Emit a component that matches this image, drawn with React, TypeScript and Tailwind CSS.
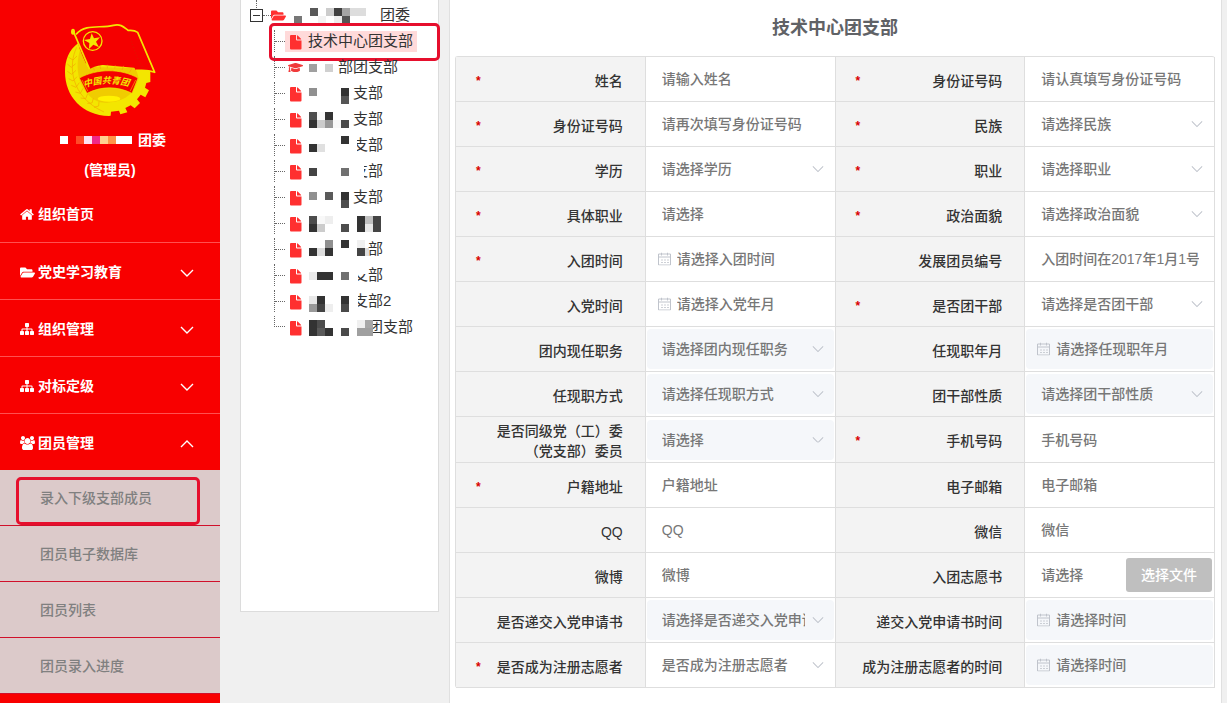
import type { ReactNode } from 'react'
import { FaFolderOpen, FaGraduationCap } from 'react-icons/fa'

type Cell = [x: number, y: number, color: string, w?: number, h?: number]

type Branch = {
  name: string
  indent: string
  icon?: 'cap'
  cells: Cell[]
}

type FieldDef = {
  id: string
  label: ReactNode
  hint: string
  kind?: 'select' | 'date' | 'file'
  required?: boolean
  disabled?: boolean
}

function HomeIcon() {
  return (
    <svg viewBox="0 0 1664 1792" width="14" height="15" fill="currentColor" aria-hidden="true">
      <path d="M1408 992v480q0 26-19 45t-45 19h-384v-384h-256v384h-384q-26 0-45-19t-19-45v-480q0-1 .5-3t.5-3l575-474 575 474q1 2 1 6zm223-69l-62 74q-8 9-21 11h-3q-13 0-21-7l-692-577-692 577q-12 8-24 7-13-2-21-11l-62-74q-8-10-7-23.5t11-21.5l719-599q32-26 76-26t76 26l244 204v-195q0-14 9-23t23-9h192q14 0 23 9t9 23v408l219 182q10 8 11 21.5t-7 23.5z" />
    </svg>
  )
}

function FolderIcon() {
  return <FaFolderOpen size={15} />
}

function SitemapIcon() {
  return (
    <svg viewBox="0 0 1792 1792" width="14" height="14" fill="currentColor" aria-hidden="true">
      <path d="M1792 1248v320q0 40-28 68t-68 28h-320q-40 0-68-28t-28-68v-320q0-40 28-68t68-28h96v-192h-512v192h96q40 0 68 28t28 68v320q0 40-28 68t-68 28h-320q-40 0-68-28t-28-68v-320q0-40 28-68t68-28h96v-192h-512v192h96q40 0 68 28t28 68v320q0 40-28 68t-68 28h-320q-40 0-68-28t-28-68v-320q0-40 28-68t68-28h96v-192q0-52 38-90t90-38h512v-192h-96q-40 0-68-28t-28-68v-320q0-40 28-68t68-28h320q40 0 68 28t28 68v320q0 40-28 68t-68 28h-96v192h512q52 0 90 38t38 90v192h96q40 0 68 28t28 68z" />
    </svg>
  )
}

function UsersIcon() {
  return (
    <svg viewBox="0 0 1920 1792" width="15" height="14" fill="currentColor" aria-hidden="true">
      <path d="M593 896q-162 5-265 128h-134q-82 0-138-40.5t-56-118.5q0-353 124-353 6 0 43.5 21t97.5 42.5 119 21.5q67 0 133-23-5 37-5 66 0 139 81 256zm1071 637q0 120-73 189.5t-194 69.5h-874q-121 0-194-69.5t-73-189.5q0-53 3.5-103.5t14-109 26.5-108.5 43-97.5 62-81 85.5-53.5 111.5-20q10 0 43 21.5t73 48 107 48 135 21.5 135-21.5 107-48 73-48 43-21.5q61 0 111.5 20t85.5 53.5 62 81 43 97.5 26.5 108.5 14 109 3.5 103.5zm-1024-1277q0 106-75 181t-181 75-181-75-75-181 75-181 181-75 181 75 75 181zm704 384q0 159-112.5 271.5t-271.5 112.5-271.5-112.5-112.5-271.5 112.5-271.5 271.5-112.5 271.5 112.5 112.5 271.5zm576 225q0 78-56 118.5t-138 40.5h-134q-103-123-265-128 81-117 81-256 0-29-5-66 66 23 133 23 59 0 119-21.5t97.5-42.5 43.5-21q124 0 124 353zm-128-609q0 106-75 181t-181 75-181-75-75-181 75-181 181-75 181 75 75 181z" />
    </svg>
  )
}

const menu = [
  { text: '组织首页', icon: HomeIcon },
  { text: '党史学习教育', icon: FolderIcon, arrow: 'down' },
  { text: '组织管理', icon: SitemapIcon, arrow: 'down' },
  { text: '对标定级', icon: SitemapIcon, arrow: 'down' },
  { text: '团员管理', icon: UsersIcon, arrow: 'up' },
]

const subMenu = ['录入下级支部成员', '团员电子数据库', '团员列表', '团员录入进度']

// cell positions are relative to the start of the branch name
const branches: Branch[] = [
  { name: '技术中心团支部', indent: 'pl-0', cells: [] },
  { name: '部团支部', indent: 'pl-[30px]', icon: 'cap', cells: [[0, 10, '#a0a0a0'], [16, 10, '#d0d0d0']] },
  { name: '支部', indent: 'pl-[45px]', cells: [[0, 8, '#909090'], [32, 8, '#333'], [32, 16, '#555']] },
  {
    name: '支部',
    indent: 'pl-[45px]',
    cells: [
      [0, 6, '#4d4d4d'], [8, 6, '#f8f8f8'], [16, 6, '#333'], [0, 14, '#333'],
      [8, 14, '#ccc'], [16, 14, '#999'], [24, 14, '#f8f8f8'], [32, 14, '#4a4a4a'],
    ],
  },
  {
    name: '支部',
    indent: 'pl-[45px]',
    cells: [[44, 4, '#fff', 4, 20], [32, 4, '#333'], [0, 12, '#333'], [8, 12, '#e0e0e0']],
  },
  { name: '支部', indent: 'pl-[45px]', cells: [[44, 2, '#fff', 11, 22], [0, 10, '#444'], [32, 10, '#707070']] },
  {
    name: '支部',
    indent: 'pl-[45px]',
    cells: [[0, 8, '#909090'], [16, 8, '#5a5a5a'], [32, 8, '#333'], [32, 16, '#4d4d4d']],
  },
  {
    name: '',
    indent: 'pl-0',
    cells: [
      [0, 6, '#4d4d4d'], [8, 6, '#f8f8f8'], [16, 6, '#eee'], [48, 6, '#333'], [56, 6, '#c0c0c0'], [64, 6, '#444'],
      [0, 14, '#333'], [8, 14, '#ccc'], [32, 14, '#4d4d4d'], [48, 14, '#333'], [56, 14, '#e8e8e8'], [64, 14, '#444'],
    ],
  },
  {
    name: '部',
    indent: 'pl-[60px]',
    cells: [
      [16, 4, '#909090'], [32, 4, '#333'], [48, 4, '#f0f0f0'], [0, 12, '#333'],
      [8, 12, '#ddd'], [16, 12, '#333'], [48, 12, '#444'], [56, 12, '#ddd', 4],
    ],
  },
  {
    name: '支部',
    indent: 'pl-[45px]',
    cells: [[44, 2, '#fff', 15, 10], [44, 12, '#fff', 5, 10], [0, 10, '#eaeaea'], [8, 10, '#333', 16], [32, 10, '#707070']],
  },
  {
    name: '支部2',
    indent: 'pl-[45px]',
    cells: [
      [44, 2, '#fff', 5, 22], [0, 8, '#e8e8e8'], [8, 8, '#333'], [32, 8, '#333'],
      [0, 16, '#999'], [8, 16, '#444'], [16, 16, '#eee'], [32, 16, '#4a4a4a'],
    ],
  },
  {
    name: '团支部',
    indent: 'pl-[60px]',
    cells: [
      [0, 6, '#333'], [8, 6, '#4d4d4d'], [48, 6, '#f0f0f0'], [56, 6, '#a8a8a8'], [0, 14, '#333'],
      [8, 14, '#5a5a5a'], [16, 14, '#333'], [32, 14, '#4a4a4a'], [48, 14, '#a0a0a0', 16],
    ],
  },
]

const rootCells: Cell[] = [
  [0, 14, '#777'], [16, 6, '#595959'], [24, 14, '#f2f2f2'], [32, 6, '#ccc'], [40, 6, '#3f3f3f'],
  [48, 6, '#a5a5a5'], [56, 6, '#ddd', 16], [40, 14, '#ededed'], [48, 14, '#555'],
]

const fields: FieldDef[] = [
  { id: 'name', label: '姓名', hint: '请输入姓名', required: true },
  { id: 'idCard', label: '身份证号码', hint: '请认真填写身份证号码', required: true },
  { id: 'idCardAgain', label: '身份证号码', hint: '请再次填写身份证号码', required: true },
  { id: 'nation', label: '民族', hint: '请选择民族', kind: 'select', required: true },
  { id: 'education', label: '学历', hint: '请选择学历', kind: 'select', required: true },
  { id: 'job', label: '职业', hint: '请选择职业', kind: 'select', required: true },
  { id: 'jobDetail', label: '具体职业', hint: '请选择', required: true },
  { id: 'political', label: '政治面貌', hint: '请选择政治面貌', kind: 'select', required: true },
  { id: 'leagueDate', label: '入团时间', hint: '请选择入团时间', kind: 'date', required: true },
  { id: 'memberNo', label: '发展团员编号', hint: '入团时间在2017年1月1号之后必填' },
  { id: 'partyDate', label: '入党时间', hint: '请选择入党年月', kind: 'date' },
  { id: 'isCadre', label: '是否团干部', hint: '请选择是否团干部', kind: 'select', required: true },
  { id: 'post', label: '团内现任职务', hint: '请选择团内现任职务', kind: 'select', disabled: true },
  { id: 'postDate', label: '任现职年月', hint: '请选择任现职年月', kind: 'date', disabled: true },
  { id: 'postWay', label: '任现职方式', hint: '请选择任现职方式', kind: 'select', disabled: true },
  { id: 'cadreType', label: '团干部性质', hint: '请选择团干部性质', kind: 'select', disabled: true },
  {
    id: 'committee',
    label: <>是否同级党（工）委<br />（党支部）委员</>,
    hint: '请选择',
    kind: 'select',
    disabled: true,
  },
  { id: 'phone', label: '手机号码', hint: '手机号码', required: true },
  { id: 'address', label: '户籍地址', hint: '户籍地址', required: true },
  { id: 'email', label: '电子邮箱', hint: '电子邮箱' },
  { id: 'qq', label: 'QQ', hint: 'QQ' },
  { id: 'wechat', label: '微信', hint: '微信' },
  { id: 'weibo', label: '微博', hint: '微博' },
  { id: 'letter', label: '入团志愿书', hint: '请选择', kind: 'file' },
  { id: 'applied', label: '是否递交入党申请书', hint: '请选择是否递交入党申请书', kind: 'select', disabled: true },
  { id: 'appliedDate', label: '递交入党申请书时间', hint: '请选择时间', kind: 'date', disabled: true },
  { id: 'volunteer', label: '是否成为注册志愿者', hint: '是否成为注册志愿者', kind: 'select', required: true },
  { id: 'volunteerDate', label: '成为注册志愿者的时间', hint: '请选择时间', kind: 'date', disabled: true },
]

function Mosaic({ cells }: { cells: Cell[] }) {
  return (
    <svg width="88" height="26" className="absolute top-0 left-px" shapeRendering="crispEdges" aria-hidden="true">
      {cells.map(([x, y, color, w = 8, h = 8]) => (
        <rect key={`${x}-${y}`} x={x} y={y} width={w} height={h} fill={color} />
      ))}
    </svg>
  )
}

function Chevron({ className, up = false, width = 12 }: { className: string; up?: boolean; width?: number }) {
  return (
    <svg viewBox="0 0 14 8" width={width} fill="none" stroke="currentColor" className={className} aria-hidden="true">
      <path d={up ? 'M1 7l6-6 6 6' : 'M1 1l6 6 6-6'} strokeWidth={width > 12 ? 1.4 : 1.2} />
    </svg>
  )
}

function FileIcon() {
  return (
    <svg width="12" height="15" viewBox="0 0 12 15" className="mt-[2px]" aria-hidden="true">
      <path d="M1 0h5v4.5q0 1 1 1h4.5V13.5q0 1-1 1H1q-1 0-1-1V1q0-1 1-1z" fill="#ff3030" />
      <path d="M7 .2q.4.1.7.4l3 3q.4.4.5.9H7z" fill="#ff3030" />
    </svg>
  )
}

function CalendarIcon() {
  return (
    <svg
      width="13"
      height="13"
      fill="none"
      stroke="#c0c4cc"
      className="pointer-events-none absolute top-1/2 left-3 -translate-y-1/2"
      aria-hidden="true"
    >
      <path d="M.5 1.5h12v11H.5zM.5 4.5h12M3.5 0v3M9.5 0v3" />
      <path d="M3 7.5h8M3 10h8" strokeDasharray="2 1" strokeWidth=".8" />
    </svg>
  )
}

function Emblem() {
  return (
    <svg viewBox="190 70 276 280" width="92" height="94" role="img" aria-label="团徽">
      <path
        d="M232 130C205 150 193 180 193 215C193 290 245 345 325 348L330 347L331 335L355 332L359 343L380 337L374 324L390 316L402 325L418 309L409 298L420 284L434 292L445 271L433 263L437 249L449 246L449 208L250 190Z"
        fill="#f3e600"
      />
      <path d="M238 150C225 190 230 240 250 268C275 305 300 310 320 308C370 305 400 285 414 235L406 205L260 200Z" fill="#f0cc00" />
      <g stroke="#f3a800" strokeWidth="2" fill="none">
        <path d="M228 142C202 195 208 290 310 336" />
        <path d="M204 172l13 8 12-12M200 192l12 10 13-11M200 214l13 9 13-12M204 236l13 7 12-13M212 256l14 6 10-14M224 276l15 4 8-15M240 294l15 2 6-15M260 310l14-1 4-14M280 322l14-4 1-13" />
        <path d="M282 212l-6-14M300 207l-3-12M320 205v-13M342 206l2-12M364 210l5-13M386 218l7-12" />
      </g>
      <ellipse cx="325" cy="296" rx="34" ry="9" fill="#fff200" />
      <path d="M236 234C290 205 360 205 412 234L394 280C350 258 302 258 259 280Z" fill="#f50000" stroke="#f3e600" strokeWidth="2" />
      <path d="M244 240l18 34M405 240l-17 34" stroke="#f3e600" strokeWidth="1.5" />
      <path id="banner" d="M251 263Q324 238 400 263" fill="none" />
      <text fill="#f3e600" className="text-[27px] font-bold italic">
        <textPath href="#banner">中国共青团</textPath>
      </text>
      <path
        d="M226 103C255 70 300 86 338 76C362 71 370 82 382 91C392 92 400 90 411 97L462 217C440 208 425 211 405 211L396 193C350 206 312 180 266 208Z"
        fill="#f50000"
      />
      <path
        d="M226 103C255 70 300 86 338 76C362 71 370 82 382 91C392 92 400 90 411 97L462 217C440 208 425 211 405 211"
        fill="none"
        stroke="#f3e600"
        strokeWidth="5"
        strokeLinejoin="round"
      />
      <path d="M218 94L267 208" stroke="#f3e600" strokeWidth="5" />
      <ellipse cx="217" cy="95" rx="6" ry="9" fill="#f3e600" />
      <path d="M384 98C396 135 405 170 426 202" stroke="#c03000" strokeWidth="1.5" strokeDasharray="3 6" fill="none" />
      <circle cx="276" cy="123" r="28" fill="none" stroke="#f3e600" strokeWidth="4" />
      <path d="M273 100l7 15 18-3-12 13 9 17-17-8-13 13 1-18-16-9 18-3z" fill="#f3e600" />
    </svg>
  )
}

function Sidebar() {
  return (
    <aside className="w-[220px] shrink-0 bg-[#f80000] font-bold text-white">
      <div className="flex flex-col items-center pt-[23px] pb-px">
        <Emblem />
        <div className="mt-2 flex h-[30px] items-center gap-[6px] pl-[6px]">
          <svg width="72" height="8" shapeRendering="crispEdges" aria-hidden="true">
            <rect width="8" height="8" fill="#fff" />
            <rect x="16" width="8" height="8" fill="#ff4a28" />
            <rect x="24" width="8" height="8" fill="#ffe0f2" />
            <rect x="32" width="8" height="8" fill="#f02888" />
            <rect x="40" width="8" height="8" fill="#ffd090" />
            <rect x="48" width="8" height="8" fill="#ff9448" />
            <rect x="56" width="16" height="8" fill="#fff" />
          </svg>
          <span>团委</span>
        </div>
        <div className="flex h-[30px] items-center">(管理员)</div>
      </div>
      <nav>
        {menu.map(({ text, icon: Icon, arrow }) => (
          <a
            key={text}
            href="#"
            className="flex h-[57px] items-center border-b border-[#ff5050] pt-[2px] pr-[26px] pl-5 first:pt-0 last-of-type:h-14 last-of-type:border-b-0"
          >
            <span className="flex w-[18px] shrink-0">
              <Icon />
            </span>
            <span>{text}</span>
            {arrow && <Chevron up={arrow === 'up'} width={14} className="mt-[2px] ml-auto" />}
          </a>
        ))}
        <ul className="flex flex-col gap-px bg-[#d0102a] pb-px">
          {subMenu.map((text, i) => (
            <li key={text} className="relative h-[55px] bg-[#dccaca] text-[#808080]">
              <a href="#" className="flex h-full items-center pl-10 font-medium">{text}</a>
              {i === 0 && (
                <span className="pointer-events-none absolute top-[7px] right-5 bottom-0 left-4 rounded-[5px] border-3 border-[#e60f2d]" />
              )}
            </li>
          ))}
        </ul>
      </nav>
    </aside>
  )
}

function BranchTree() {
  return (
    <section className="ml-5 h-[612px] w-[199px] shrink-0 border border-t-0 border-[#dcdcdc] bg-white pt-[2px] text-[15px] text-[#333]">
      <div className="relative flex h-[26px] items-center pl-[9px]">
        <span className="absolute -top-[2px] left-[15px] h-2 border-l border-dotted border-[#666]" />
        <button type="button" aria-label="收起" className="flex size-[13px] items-center justify-center border border-[#333]">
          <span className="h-px w-[7px] bg-[#333]" />
        </button>
        <span className="w-2 border-t border-dotted border-[#666]" />
        <FaFolderOpen size={15} color="#ff3030" />
        <span className="relative ml-[7px] flex h-[26px] items-center pl-[87px]">
          团委
          <Mosaic cells={rootCells} />
        </span>
      </div>
      <ul>
        {branches.map((b, i) => (
          <li key={i} className="relative flex h-[26px] items-center pl-[33px]">
            <span
              className={
                i === branches.length - 1
                  ? 'mb-[11px] h-[11px] w-[11px] border-b border-l border-dotted border-[#666]'
                  : 'flex h-[22px] w-[11px] items-center border-l border-dotted border-[#666]'
              }
            >
              {i < branches.length - 1 && <span className="w-full border-t border-dotted border-[#666]" />}
            </span>
            <a href="#" className={i === 0 ? 'flex h-[21px] items-center bg-[#ffdada] pr-1' : 'flex h-[21px] items-center'}>
              {b.icon === 'cap' ? (
                <span className="w-[23px] pl-[3px]">
                  <FaGraduationCap size={15} color="#f03a3a" />
                </span>
              ) : (
                <span className="w-[23px] pl-[5px]">
                  <FileIcon />
                </span>
              )}
              <span className={`relative flex h-[26px] items-center ${b.indent}`}>
                {b.name}
                <Mosaic cells={b.cells} />
              </span>
            </a>
            {i === 0 && (
              <span className="pointer-events-none absolute -top-[5px] -right-[2px] -bottom-[7px] left-7 rounded-[5px] border-3 border-[#e60f2d]" />
            )}
          </li>
        ))}
      </ul>
    </section>
  )
}

function Control({ field }: { field: FieldDef }) {
  const { id, hint, kind, disabled } = field

  if (kind === 'select') {
    return (
      <>
        <select
          id={id}
          disabled={disabled}
          className="h-10 w-full appearance-none rounded bg-transparent pr-[29px] pl-[15px] text-[#777] opacity-100 outline-none disabled:bg-[#f5f7fa]"
        >
          <option>{hint}</option>
        </select>
        <Chevron className="pointer-events-none absolute top-1/2 right-[11px] -translate-y-1/2 text-[#c0c4cc]" />
      </>
    )
  }

  if (kind === 'date') {
    return (
      <>
        <input
          id={id}
          placeholder={hint}
          disabled={disabled}
          className="h-10 w-full rounded pr-4 pl-[30px] outline-none placeholder:text-[#777] disabled:bg-[#f5f7fa]"
        />
        <CalendarIcon />
      </>
    )
  }

  if (kind === 'file') {
    return (
      <>
        <input id={id} readOnly placeholder={hint} className="h-10 min-w-0 flex-1 pl-[15px] outline-none placeholder:text-[#777]" />
        <button type="button" className="mr-px h-[34px] w-[86px] shrink-0 rounded-[3px] bg-[#bfbfbf] text-white">
          选择文件
        </button>
      </>
    )
  }

  return <input id={id} placeholder={hint} className="h-10 w-full pr-[14px] pl-[15px] outline-none placeholder:text-[#777]" />
}

export default function App() {
  return (
    <div className="flex min-h-screen bg-[#f0f0f0] font-['Liberation_Sans','Noto_Sans_CJK_SC',sans-serif] text-sm">
      <Sidebar />
      <BranchTree />
      <main className="mr-[5px] ml-[10px] min-w-0 flex-1 border-x border-[#e0e0e0] bg-white pr-[6px] pb-[15px] pl-[5px]">
        <h1 className="flex h-14 items-center justify-center text-lg font-bold text-[#606266]">技术中心团支部</h1>
        <form className="grid grid-cols-4 rounded-[3px] border-t border-l border-[#dedede] font-medium">
          {fields.map((f) => (
            <div key={f.id} className="col-span-2 grid min-h-[45px] grid-cols-2">
              <div className="flex items-center justify-between border-r border-b border-[#dedede] bg-[#f3f3f3] pt-1 pr-[22px] pb-px pl-5">
                <span className="text-xs leading-5 font-bold text-[#d90000]">{f.required && '*'}</span>
                <label htmlFor={f.id} className="text-right leading-5 text-[#333]">{f.label}</label>
              </div>
              <div className="relative flex items-center border-r border-b border-[#dedede] px-px">
                <Control field={f} />
              </div>
            </div>
          ))}
        </form>
      </main>
    </div>
  )
}
